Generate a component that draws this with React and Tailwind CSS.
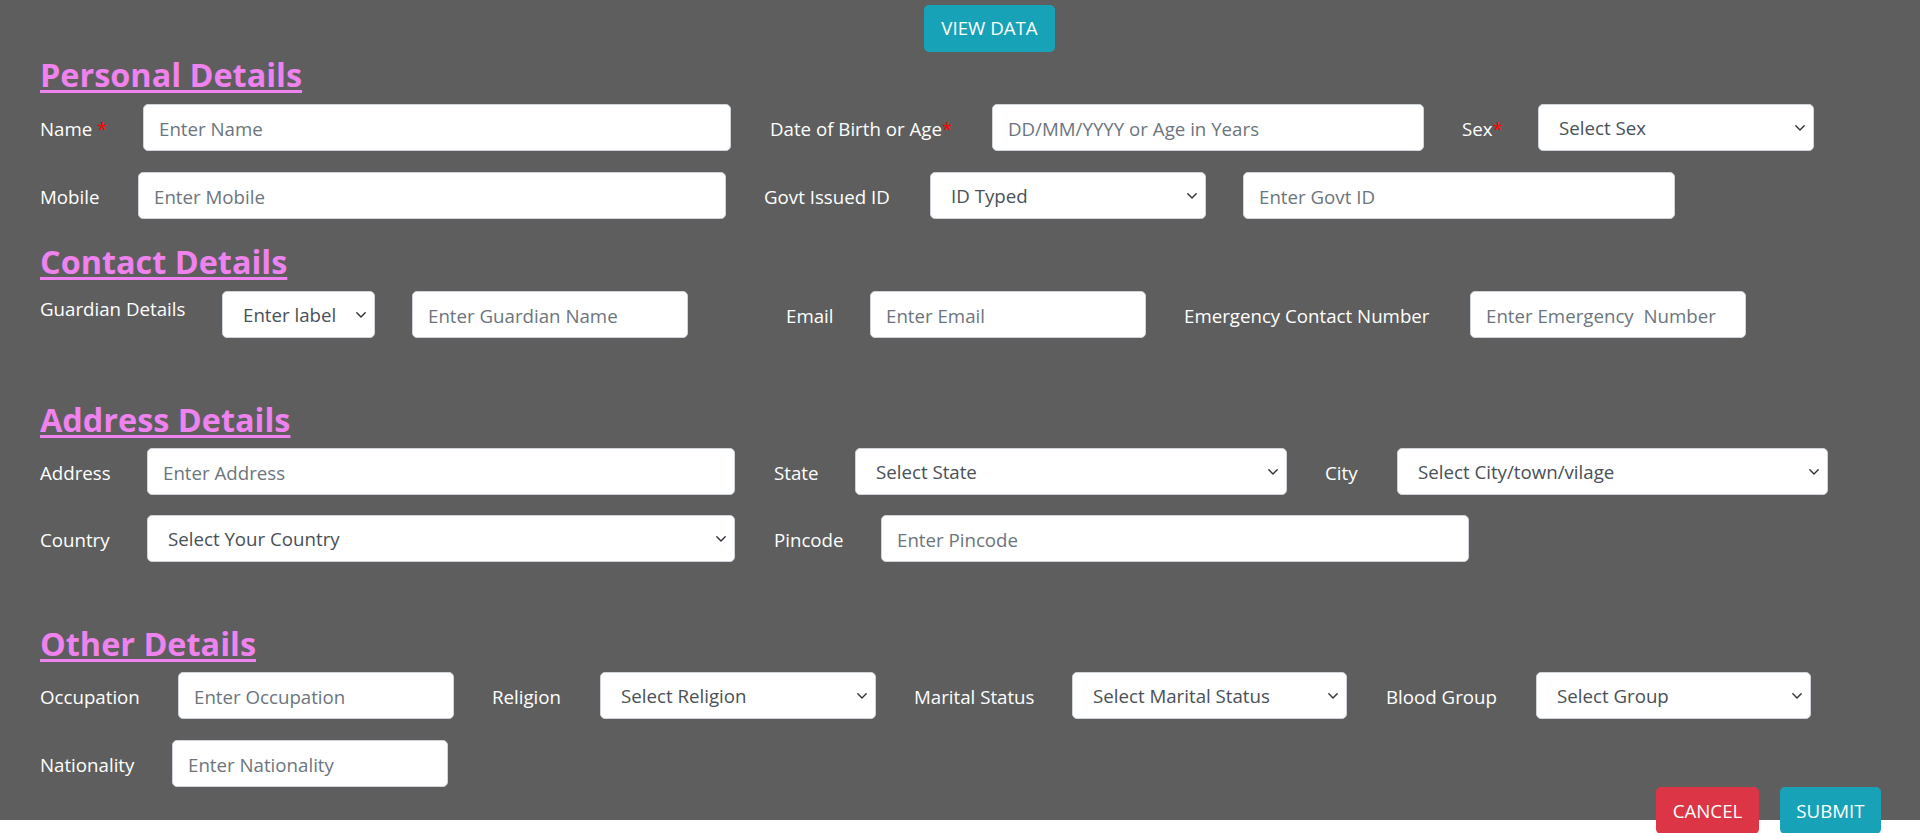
import React from 'react';

const Chevron = () => (
    <svg className="absolute right-[8px] top-1/2 -translate-y-1/2 pointer-events-none" width="12" height="8" viewBox="0 0 12 8" fill="none">
        <path d="M1.8 1.8L6 6L10.2 1.8" stroke="#333" strokeWidth="1.4" strokeLinecap="round" strokeLinejoin="round" />
    </svg>
);

const Input = ({ placeholder, w }) => (
    <input
        type="text"
        placeholder={placeholder}
        className={`${w} h-[47px] shrink-0 bg-white border border-[#ced4da] rounded-[5px] px-[15px] pt-[2px] text-[18.7px] text-[#495057] placeholder:text-[#6c757d] outline-none`}
    />
);

const Select = ({ label, w }) => (
    <div className={`${w} relative h-[47px] shrink-0`}>
        <select className="w-full h-full appearance-none bg-white border border-[#ced4da] rounded-[5px] pl-[20px] pr-[30px] pt-[2px] text-[18.7px] text-[#495057] outline-none">
            <option>{label}</option>
        </select>
        <Chevron />
    </div>
);

const Label = ({ children, w, req, className = '' }) => (
    <label className={`${w} shrink-0 text-white text-[18.7px] leading-[26px] pt-[2px] ${className}`}>
        {children}
        {req && <span className="text-[#ff0000]">*</span>}
    </label>
);

const Heading = ({ children, className = '' }) => (
    <h2 className={`text-[32.4px] leading-[40px] font-bold text-[#ee82ee] underline decoration-[2.5px] underline-offset-[3px] w-fit ${className}`}>
        {children}
    </h2>
);

export default function App() {
    return (
        <div className="font-['Open_Sans',sans-serif] bg-white min-h-screen">
            <div className="bg-[#5d5e5d] h-[820px] w-full pl-[40px]">
                {/* top action */}
                <div className="pt-[5px] pl-[884px]">
                    <button className="w-[131px] h-[47px] bg-[#17a2b8] text-white rounded-[5px] text-[18.7px]">VIEW DATA</button>
                </div>

                {/* Personal Details */}
                <Heading className="mt-[2px]">Personal Details</Heading>
                <div className="flex items-center mt-[10px]">
                    <Label w="w-[103px]">Name <span className="text-[#ff0000]">*</span></Label>
                    <Input w="w-[588px]" placeholder="Enter Name" />
                    <Label w="w-[222px]" className="ml-[39px]" req>Date of Birth or Age</Label>
                    <Input w="w-[432px]" placeholder="DD/MM/YYYY or Age in Years" />
                    <Label w="w-[76px]" className="ml-[38px]" req>Sex</Label>
                    <Select w="w-[276px]" label="Select Sex" />
                </div>
                <div className="flex items-center mt-[21px]">
                    <Label w="w-[98px]">Mobile</Label>
                    <Input w="w-[588px]" placeholder="Enter Mobile" />
                    <Label w="w-[166px]" className="ml-[38px]">Govt Issued ID</Label>
                    <Select w="w-[276px]" label="ID Typed" />
                    <div className="ml-[37px]"><Input w="w-[432px]" placeholder="Enter Govt ID" /></div>
                </div>

                {/* Contact Details */}
                <Heading className="mt-[22px]">Contact Details</Heading>
                <div className="flex items-center mt-[10px]">
                    <Label w="w-[182px]" className="self-start pt-[5px]">Guardian Details</Label>
                    <Select w="w-[153px]" label="Enter label" />
                    <div className="ml-[37px]"><Input w="w-[276px]" placeholder="Enter Guardian Name" /></div>
                    <Label w="w-[84px]" className="ml-[98px]">Email</Label>
                    <Input w="w-[276px]" placeholder="Enter Email" />
                    <Label w="w-[286px]" className="ml-[38px]">Emergency Contact Number</Label>
                    <Input w="w-[276px]" placeholder="Enter Emergency  Number" />
                </div>

                {/* Address Details */}
                <Heading className="mt-[61px]">Address Details</Heading>
                <div className="flex items-center mt-[9px]">
                    <Label w="w-[107px]">Address</Label>
                    <Input w="w-[588px]" placeholder="Enter Address" />
                    <Label w="w-[81px]" className="ml-[39px]">State</Label>
                    <Select w="w-[432px]" label="Select State" />
                    <Label w="w-[72px]" className="ml-[38px]">City</Label>
                    <Select w="w-[431px]" label="Select City/town/vilage" />
                </div>
                <div className="flex items-center mt-[20px]">
                    <Label w="w-[107px]">Country</Label>
                    <Select w="w-[588px]" label="Select Your Country" />
                    <Label w="w-[107px]" className="ml-[39px]">Pincode</Label>
                    <Input w="w-[588px]" placeholder="Enter Pincode" />
                </div>

                {/* Other Details */}
                <Heading className="mt-[61px]">Other Details</Heading>
                <div className="flex items-center mt-[9px]">
                    <Label w="w-[138px]">Occupation</Label>
                    <Input w="w-[276px]" placeholder="Enter Occupation" />
                    <Label w="w-[108px]" className="ml-[38px]">Religion</Label>
                    <Select w="w-[276px]" label="Select Religion" />
                    <Label w="w-[158px]" className="ml-[38px]">Marital Status</Label>
                    <Select w="w-[275px]" label="Select Marital Status" />
                    <Label w="w-[150px]" className="ml-[39px]">Blood Group</Label>
                    <Select w="w-[275px]" label="Select Group" />
                </div>
                <div className="flex items-center mt-[21px]">
                    <Label w="w-[132px]">Nationality</Label>
                    <Input w="w-[276px]" placeholder="Enter Nationality" />
                </div>

                {/* footer actions */}
                <div className="flex justify-end gap-[21px] pr-[39px]">
                    <button className="w-[103px] h-[47px] bg-[#dc3545] text-white rounded-[5px] text-[18.7px] pt-[2px]">CANCEL</button>
                    <button className="w-[101px] h-[47px] bg-[#17a2b8] text-white rounded-[5px] text-[18.7px] pt-[2px]">SUBMIT</button>
                </div>
            </div>
        </div>
    );
}
